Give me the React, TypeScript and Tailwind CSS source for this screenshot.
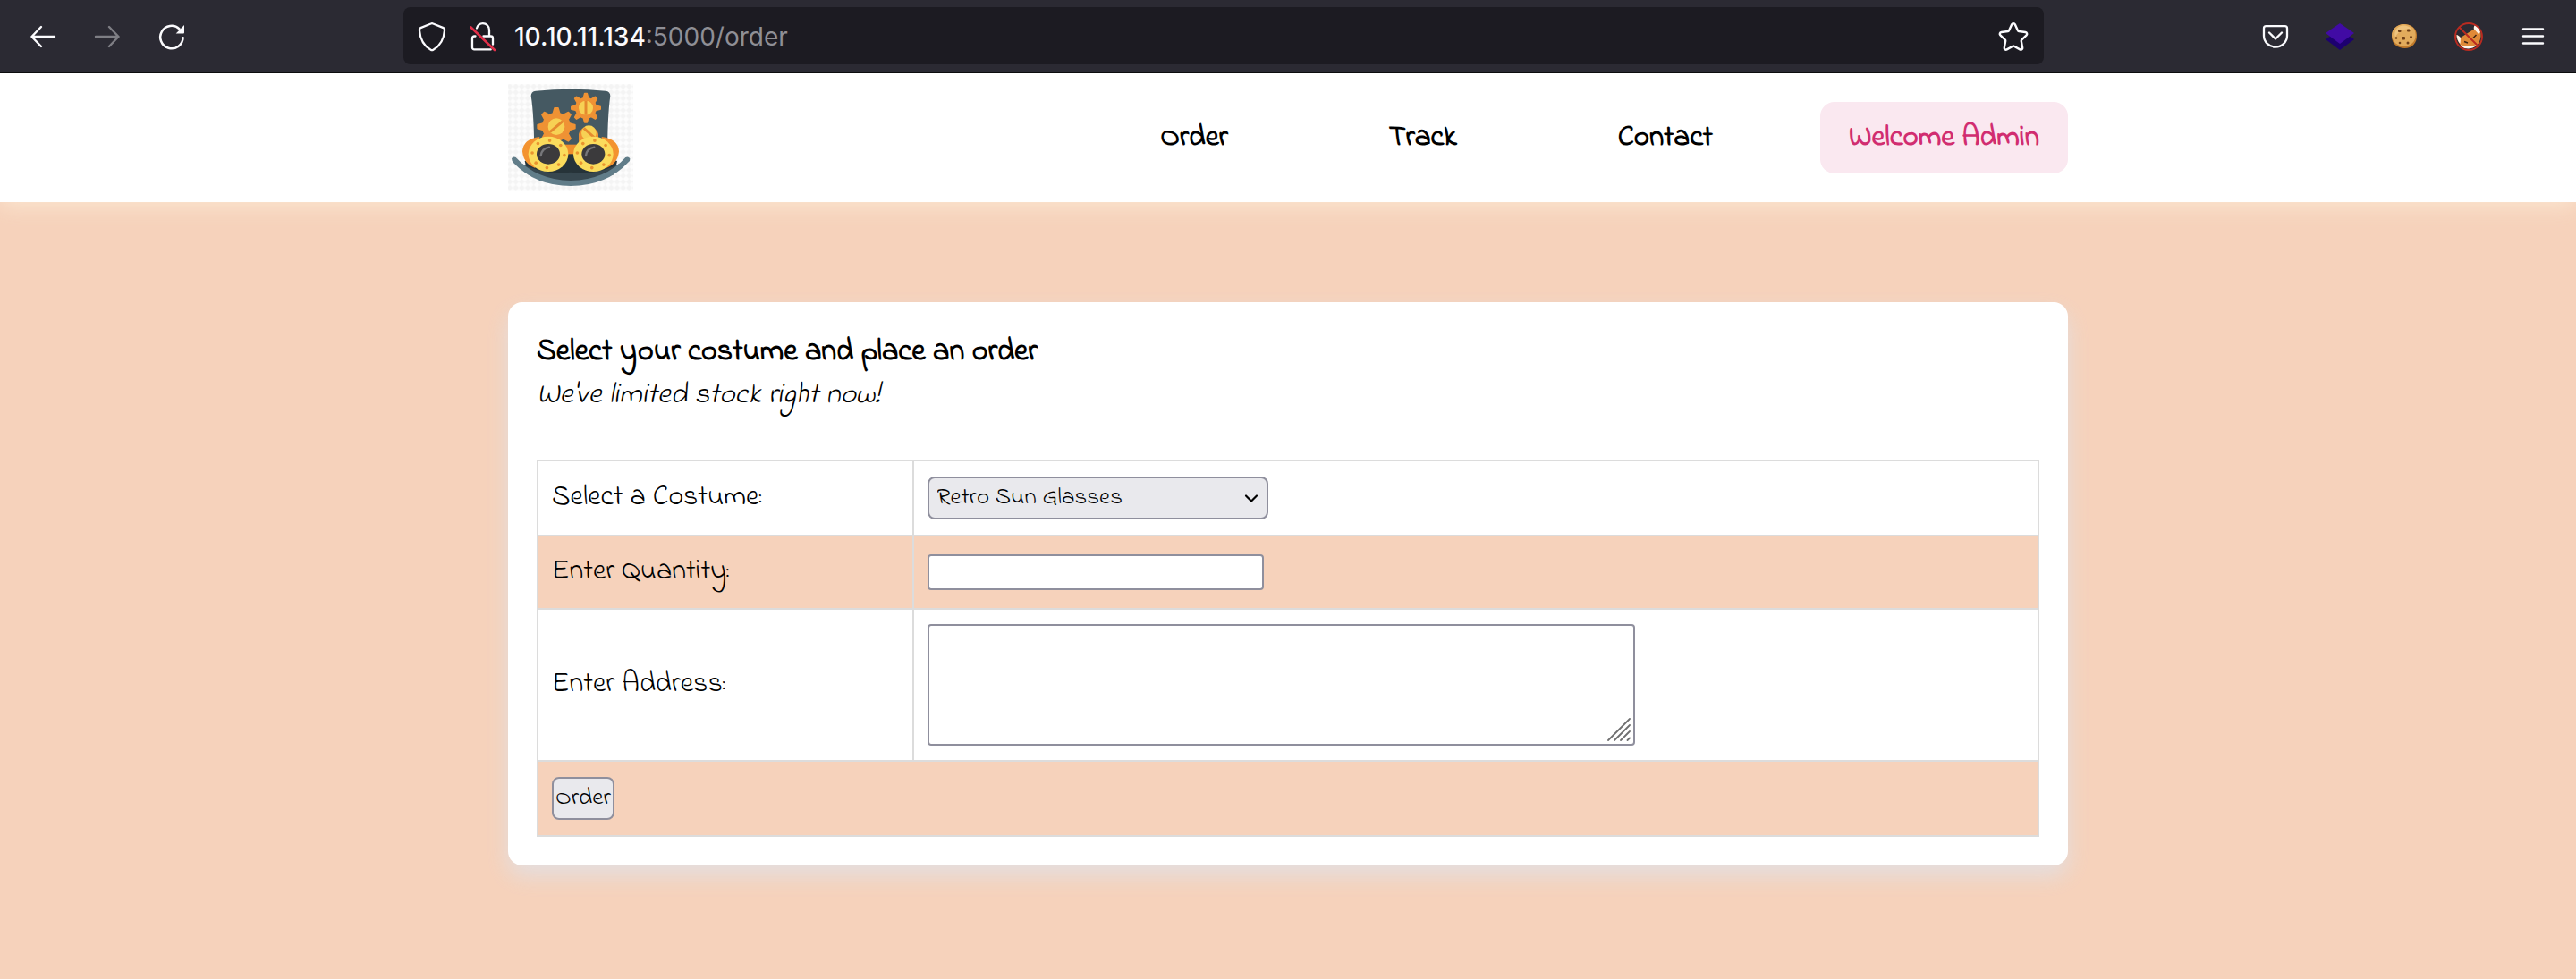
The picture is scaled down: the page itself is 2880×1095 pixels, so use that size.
import type { ReactNode } from "react";

const NAV = ["Order", "Track", "Contact"];
const COSTUMES = ["Retro Sun Glasses", "Phantom Mask", "Steampunk Hat"];

function ToolbarButton({ label, children }: { label: string; children: ReactNode }) {
  return (
    <button type="button" aria-label={label} className="flex h-16 w-[72px] items-center justify-center pt-0.5 text-[#fbfbfe]">
      {children}
    </button>
  );
}

function BackIcon({ className }: { className?: string }) {
  return (
    <svg viewBox="0 0 32 32" className={className} fill="none" stroke="currentColor" strokeWidth="2.4" strokeLinecap="round" strokeLinejoin="round">
      <path d="M29 16H3.500M14 5 3.500 16 14 27" />
    </svg>
  );
}

function ReloadIcon() {
  return (
    <svg viewBox="0 0 32 32" className="size-8" fill="none" stroke="currentColor" strokeWidth="2.500" strokeLinecap="round">
      <path d="M28.600 17.200A12.700 12.700 0 1 1 24.600 7.300" />
      <path d="M30 3v8.500a1 1 0 0 1-1 1h-8.300z" fill="currentColor" stroke="none" />
    </svg>
  );
}

function ShieldIcon() {
  return (
    <svg viewBox="0 0 32 36" className="h-9 w-8" fill="none" stroke="#fbfbfe" strokeWidth="2.300" strokeLinejoin="round">
      <path d="M16 3.200c.5 0 .9.100 1.300.300l11.400 4.600c1 .400 1.500 1.300 1.400 2.400C29.400 20 25 28.500 17.400 32.700c-.9.500-1.900.500-2.800 0C7 28.500 2.600 20 1.900 10.500c-.1-1.100.4-2 1.400-2.400l11.400-4.600c.4-.2.800-.3 1.300-.3z" />
    </svg>
  );
}

function InsecureIcon() {
  return (
    <svg viewBox="0 0 32 36" className="h-9 w-8" fill="none" strokeLinecap="round">
      <g stroke="#fbfbfe" strokeWidth="2.300">
        <path d="M10 8.500C11 5.500 13.500 3.200 16.800 3.200c4 0 7.200 3.200 7.200 7.200v6.600" />
        <path d="M8.500 17.500H7.200a2.200 2.200 0 0 0-2.200 2.200v10.500a2.200 2.200 0 0 0 2.200 2.200h18.500" />
        <path d="M17.500 17.500h8.300a2.200 2.200 0 0 1 2.200 2.200v7" />
      </g>
      <path d="M3.500 7.500 30 33" stroke="#e2304a" strokeWidth="2.600" />
    </svg>
  );
}

function StarIcon() {
  return (
    <svg viewBox="0 0 36 36" className="size-9" fill="none" stroke="#fbfbfe" strokeWidth="2.400" strokeLinejoin="round">
      <path d="M16.200 4.300c.7-1.500 2.900-1.500 3.600 0l3.200 6.900c.2.400.6.700 1.100.800l7.400 1c1.700.200 2.300 2.200 1.100 3.400l-5.400 5.200c-.3.300-.5.800-.4 1.300l1.400 7.500c.3 1.600-1.400 2.800-2.900 2l-6.600-3.700c-.4-.2-1-.2-1.400 0l-6.600 3.700c-1.500.8-3.200-.4-2.900-2l1.400-7.500c.1-.5-.1-1-.4-1.300l-5.400-5.200c-1.200-1.200-.6-3.200 1.100-3.400l7.400-1c.5-.1.900-.4 1.100-.8z" />
    </svg>
  );
}

function PocketIcon() {
  return (
    <svg viewBox="0 0 32 32" className="size-8" fill="none" stroke="currentColor" strokeWidth="2.300" strokeLinecap="round" strokeLinejoin="round">
      <path d="M5.500 4.200h21a2.500 2.500 0 0 1 2.500 2.500V15a13 12.500 0 0 1-26 0V6.700a2.500 2.500 0 0 1 2.500-2.500z" />
      <path d="m9 11.500 7 7 7-7" />
    </svg>
  );
}

function LayersIcon() {
  return (
    <svg viewBox="0 0 32 32" className="size-8">
      <path d="M0 19 16 8l16 11-16 12z" fill="#1d0070" />
      <path d="M0 12 16 1l16 11-16 12z" fill="#410ba4" />
    </svg>
  );
}

function CookieIcon() {
  return (
    <svg viewBox="0 0 32 32" className="size-8">
      <path d="M16 2c7 0 13.500 4 14 12 .5 9-5.500 15-13.500 15S2 24 2 16C2 8 8 2 16 2z" fill="#c07a2b" />
      <path d="M15.500 2c7 0 13 4 13.200 11.500.3 8-5.200 13.200-12.700 13.200S2.500 22 2 15C1.700 7.500 8 2 15.500 2z" fill="#e2ab5c" />
      <path d="M12 4c6-1.500 11 1 13 5-4-2-8-2-12 0s-6 5-7 8C4 11 7 5.500 12 4z" fill="#efc47e" />
      <g fill="#6f3f17">
        <rect x="9" y="8" width="3.500" height="3" rx="1" />
        <rect x="19" y="7.500" width="3.500" height="3" rx="1" />
        <rect x="13.500" y="16" width="3.500" height="3.500" rx="1" />
        <circle cx="23.500" cy="16.500" r="1.500" />
        <circle cx="7" cy="17.500" r="1.300" />
        <circle cx="11" cy="23" r="1.300" />
        <circle cx="20" cy="23" r="1.500" />
      </g>
    </svg>
  );
}

function NoFoxIcon() {
  return (
    <svg viewBox="0 0 32 32" className="size-8">
      <path d="M2.500 14c1 0 3 1.500 4.500 3l15-9.500c-.5-1.500 0-3.500 1-4.500 3 1.500 6 5.500 6.500 9.500.5 4-1 9-3.500 12.500-4 3-9.500 4.500-13 4-3-.5-5.500-2-6.500-4C4.500 22 2.500 18 2.500 14z" fill="#e08a38" />
      <path d="M2.500 14c1.500.3 3.500 2 4.500 3.500L6.500 24C4.500 22 2.500 18 2.500 14zM22 7.500c-.5-1.500 0-3.500 1-4.500 2.500 1 5 4.500 6 7.500l-1.500 3zM7 25c4 2.500 10 2.500 15 1l4-1c-4 4-9.500 4.800-13 4.300-3-.5-5-2-6-4.300z" fill="#fdf6ee" />
      <path d="m11 21.500 4 1.500m6-5.500 3.500-3.500" stroke="#3b2314" strokeWidth="1.500" />
      <circle cx="16" cy="16" r="15" fill="none" stroke="#b92b21" strokeWidth="1.900" />
      <path d="m5.500 5.500 21 21" stroke="#b92b21" strokeWidth="1.900" />
    </svg>
  );
}

function MenuIcon() {
  return (
    <svg viewBox="0 0 32 32" className="size-8" stroke="currentColor" strokeWidth="2.400" strokeLinecap="round">
      <path d="M5 7.500h22M5 15.500h22M5 23.500h22" />
    </svg>
  );
}

function BrowserBar() {
  return (
    <div className="relative z-10 flex h-[82px] items-center border-b-2 border-[#0c0c0d] bg-[#2b2a33] px-3">
      <div className="flex shrink-0">
        <ToolbarButton label="Back">
          <BackIcon className="size-8" />
        </ToolbarButton>
        <ToolbarButton label="Forward">
          <BackIcon className="size-8 rotate-180 opacity-40" />
        </ToolbarButton>
        <ToolbarButton label="Reload">
          <ReloadIcon />
        </ToolbarButton>
      </div>
      <div className="mx-[223px] flex h-16 flex-1 items-center rounded-lg bg-[#1c1b22] px-4 pt-0.5">
        <ShieldIcon />
        <span className="ml-6">
          <InsecureIcon />
        </span>
        <p className="ml-5 flex-1 font-[Inter,Roboto,sans-serif] text-[28px] leading-9 text-[#8f8f95]">
          <span className="font-medium text-[#fbfbfe]">10.10.11.134</span>:5000/order
        </p>
        <button type="button" aria-label="Bookmark this page">
          <StarIcon />
        </button>
      </div>
      <div className="flex shrink-0">
        <ToolbarButton label="Save to Pocket">
          <PocketIcon />
        </ToolbarButton>
        <ToolbarButton label="Layers extension">
          <LayersIcon />
        </ToolbarButton>
        <ToolbarButton label="Cookie editor">
          <CookieIcon />
        </ToolbarButton>
        <ToolbarButton label="Proxy switcher">
          <NoFoxIcon />
        </ToolbarButton>
        <ToolbarButton label="Open menu">
          <MenuIcon />
        </ToolbarButton>
      </div>
    </div>
  );
}

const TEETH = [0, 45, 90, 135, 180, 225, 270, 315];

function Gear({ cx, cy, body, outer, hub, slot }: { cx: number; cy: number; body: number; outer: number; hub: number; slot: number }) {
  const w = outer * 0.13;
  return (
    <g transform={`translate(${cx} ${cy})`} fill="#ef9234">
      {TEETH.map((a) => (
        <path
          key={a}
          transform={`rotate(${a})`}
          d={`M${-w * 1.6} ${-body + 3}L${-w} ${-outer + 3}Q${-w} ${-outer} ${-w + 3} ${-outer}H${w - 3}Q${w} ${-outer} ${w} ${-outer + 3}L${w * 1.6} ${-body + 3}z`}
        />
      ))}
      <circle r={body} />
      <circle r={hub} fill="#f7d154" />
      <path transform={`rotate(${slot})`} d={`M0 ${-hub}V${hub}`} stroke="#e58a2e" strokeWidth="9" />
    </g>
  );
}

function Lens({ cx }: { cx: number }) {
  return (
    <g transform={`translate(${cx} 277)`}>
      <ellipse rx="67" ry="59" fill="#fbdc5c" />
      {TEETH.map((a) => {
        const t = ((a + 5) * Math.PI) / 180;
        return <circle key={a} cx={54 * Math.cos(t)} cy={46 * Math.sin(t)} r="5.500" fill="#e9942f" />;
      })}
      <ellipse rx="39" ry="34" fill="#3b3a3c" />
      <path d="M-25 5Q-22-19 3-23" fill="none" stroke="#77777a" strokeWidth="7" strokeLinecap="round" />
    </g>
  );
}

function Logo() {
  return (
    <svg viewBox="24 42 420 360" className="h-[120px] w-[140px]" role="img" aria-label="Steampunk hat with goggles">
      <defs>
        <pattern id="checks" width="20" height="20" patternUnits="userSpaceOnUse">
          <rect width="20" height="20" fill="#fdfdfd" />
          <path d="M10 0 20 10 10 20 0 10z" fill="#f4f4f4" />
        </pattern>
      </defs>
      <rect x="24" y="42" width="420" height="360" fill="url(#checks)" />
      <path d="M101 82Q101 67 117 65Q235 54 351 65Q367 67 367 82Q357 150 357 300H112Q112 150 101 82z" fill="#455962" />
      <path d="M80 300Q235 250 390 300L380 345Q235 400 90 345z" fill="#263339" />
      <path d="M52 300Q140 350 234 338Q330 350 416 300Q350 378 234 376Q120 378 52 300z" fill="#37474f" />
      <path d="M36 292Q40 284 50 288Q120 364 234 366Q350 364 418 288Q428 284 433 292Q434 300 428 304Q354 384 234 384Q116 384 42 306Q36 300 36 292z" fill="#617d89" />
      <Gear cx={285} cy={122} body={36} outer={51} hub={24} slot={0} />
      <Gear cx={186} cy={185} body={48} outer={65} hub={28} slot={50} />
      <path d="M261 240V210a34 34 0 0 1 66 0v30z" fill="#ef9234" />
      <circle cx="295" cy="206" r="25" fill="#f7d154" />
      <path d="m278 190 36 32" stroke="#e58a2e" strokeWidth="9" />
      <path d="M210 245h50v32h-50z" fill="#f08f2c" />
      <path d="M130 219Q74 226 72 268Q76 310 115 324zM338 219Q394 226 396 268Q392 310 353 324z" fill="#f39330" />
      <Lens cx={159} />
      <Lens cx={310} />
    </svg>
  );
}

function SiteHeader() {
  return (
    <header className="bg-white shadow-[0_4px_24px_rgba(255,245,225,0.6)]">
      <div className="mx-auto flex h-36 max-w-[1744px] items-center justify-between">
        <a href="#home">
          <Logo />
        </a>
        <nav className="flex items-center gap-15 text-[33px] leading-12 font-bold">
          {NAV.map((item) => (
            <a key={item} href={`#${item.toLowerCase()}`} className="px-15 text-black">
              {item}
            </a>
          ))}
          <a href="#account" className="rounded-2xl bg-[#fae8f0] px-8 py-4 text-[#d12d70]">
            Welcome Admin
          </a>
        </nav>
      </div>
    </header>
  );
}

function OrderForm() {
  const cell = "border-2 border-[#dcdcdc] px-[15px] py-0 align-middle";
  return (
    <form onSubmit={(e) => e.preventDefault()}>
      <table className="mt-12 w-full table-fixed border-collapse text-[32px] leading-12">
        <colgroup>
          <col className="w-1/4" />
          <col />
        </colgroup>
        <tbody>
          <tr className="h-[84px]">
            <td className={cell}>
              <label htmlFor="costume">Select a Costume:</label>
            </td>
            <td className={cell}>
              <div className="relative w-[381px]">
                <select
                  id="costume"
                  className="block h-12 w-full appearance-none rounded-lg border-2 border-[#8f8f9d] bg-[#e9e9ed] pr-10 pl-[9px] text-[27px] leading-10 text-black"
                >
                  {COSTUMES.map((c) => (
                    <option key={c}>{c}</option>
                  ))}
                </select>
                <svg viewBox="0 0 16 16" className="pointer-events-none absolute top-4 right-[11px] size-4" fill="none" stroke="black" strokeWidth="2.200" strokeLinecap="round" strokeLinejoin="round">
                  <path d="m2 5.500 6 6 6-6" />
                </svg>
              </div>
            </td>
          </tr>
          <tr className="h-[82px] bg-[#f6d2bb]">
            <td className={cell}>
              <label htmlFor="quantity">Enter Quantity:</label>
            </td>
            <td className={cell}>
              <input id="quantity" type="text" className="block h-10 w-[376px] rounded border-2 border-[#8f8f9d] bg-white px-1 text-[27px]" />
            </td>
          </tr>
          <tr className="h-[170px]">
            <td className={cell}>
              <label htmlFor="address">Enter Address:</label>
            </td>
            <td className={cell}>
              <div className="relative w-[791px] max-w-full">
                <textarea id="address" className="block h-[136px] w-full resize-none rounded border-2 border-[#8f8f9d] bg-white px-1 text-[27px]" />
                <svg viewBox="0 0 26 26" className="pointer-events-none absolute right-[5px] bottom-[5px] size-[26px]" stroke="#6f6f70" strokeWidth="1.800" strokeLinecap="round">
                  <path d="M1 25 25 1M8 25 25 8M15 25l10-10M22.500 25l2.500-2.500" />
                </svg>
              </div>
            </td>
          </tr>
          <tr className="h-[84px] bg-[#f6d2bb]">
            <td colSpan={2} className={cell}>
              <button type="submit" className="block h-12 rounded-lg border-2 border-[#8f8f9d] bg-[#e9e9ed] px-0.5 text-[27px] leading-10 text-black">
                Order
              </button>
            </td>
          </tr>
        </tbody>
      </table>
    </form>
  );
}

export default function App() {
  return (
    <div className="flex min-h-screen flex-col bg-[#f6d2bb] text-black">
      <BrowserBar />
      <div className="font-['Indie_Flower','Comic_Neue','Lato',cursive]">
        <SiteHeader />
        <main className="mx-auto mt-28 max-w-[1744px] rounded-2xl bg-white p-8 shadow-[0_12px_24px_rgba(216,230,247,0.6)]">
          <h1 className="text-[34px] leading-12 font-bold">Select your costume and place an order</h1>
          <p className="text-[33px] leading-12 italic">We've limited stock right now!</p>
          <OrderForm />
        </main>
      </div>
    </div>
  );
}
